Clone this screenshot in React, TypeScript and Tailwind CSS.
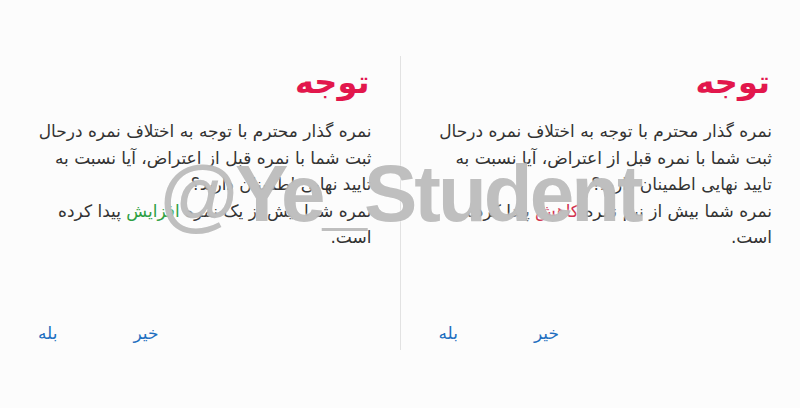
import React from 'react';

type Change = { word: string; tone: 'up' | 'down'; amount: string };

const Panel: React.FC<{ change: Change }> = ({ change }) => (
  <div dir="rtl" className="flex-1 flex flex-col pr-[28px] pl-[38px]">
    <h2 className="mt-[62px] pr-[2px] text-[32px] leading-[40px] font-bold text-[#e2174c]">توجه</h2>
    <div className="mt-[16px] text-[17px] leading-[26.5px] text-[#333]">
      <p>نمره گذار محترم با توجه به اختلاف نمره درحال</p>
      <p>ثبت شما با نمره قبل از اعتراض، آیا نسبت به</p>
      <p>تایید نهایی اطمینان دارید؟</p>
      <p>
        نمره شما بیش از {change.amount} نمره{' '}
        <span className={change.tone === 'up' ? 'text-[#2ea043]' : 'text-[#d0314f]'}>{change.word}</span> پیدا کرده
      </p>
      <p>است.</p>
    </div>
    <div className="mt-auto mb-[62px] flex justify-end gap-[76px] text-[17px] text-[#1e6fc0]">
      <button>خیر</button>
      <button>بله</button>
    </div>
  </div>
);

export default function App() {
  return (
    <div
      className="relative h-[408px] w-[800px] overflow-hidden bg-[#fcfcfc] flex"
      style={{ fontFamily: '"DejaVu Sans", sans-serif' }}
    >
      <Panel change={{ word: 'افزایش', tone: 'up', amount: 'یک' }} />
      <div className="mt-[56px] h-[294px] w-px bg-[#e2e2e2]" />
      <Panel change={{ word: 'کاهش', tone: 'down', amount: 'نیم' }} />

      {/* channel watermark over both panels */}
      <div
        className="pointer-events-none absolute left-[160px] top-[154px] text-[80px] leading-none font-bold tracking-[-3px] text-[#9c9c9c]/65"
        style={{ fontFamily: '"Liberation Sans", sans-serif', textShadow: '0 0 2px #fff' }}
      >
        @Ye_Student
      </div>
    </div>
  );
}
